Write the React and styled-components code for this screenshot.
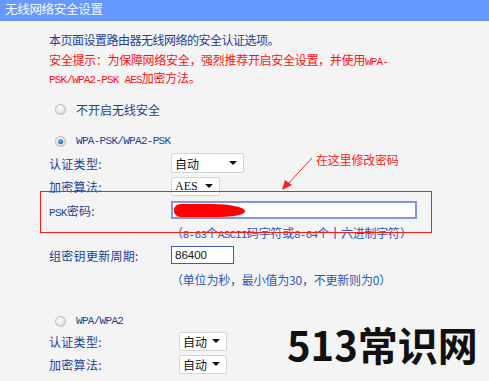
import React from 'react';
import styled, { createGlobalStyle } from 'styled-components';

const GlobalStyle = createGlobalStyle`
  html, body {
    margin: 0;
    padding: 0;
    background: #f4f4f4;
  }
  body {
    font-family: "Noto Sans CJK SC", "Noto Sans", sans-serif;
  }
`;

const Page = styled.div`
  position: relative;
  width: 489px;
  height: 381px;
  overflow: hidden;
  background: #f4f4f4;
`;

const TitleBar = styled.div`
  height: 21px;
  background: #6699ff;
  color: #f4f8ff;
  font-size: 12.5px;
  line-height: 18px;
  padding-left: 5px;
  letter-spacing: -0.3px;
`;

const Main = styled.div`
  padding-left: 49px;
`;

const Intro = styled.div`
  margin-top: 11px;
  font-size: 12px;
  line-height: 16px;
  color: #1d3f96;
  letter-spacing: -0.5px;
  white-space: nowrap;
`;

const Warning = styled.div`
  margin-top: 4px;
  font-size: 12px;
  line-height: 16px;
  color: #ff1010;
  letter-spacing: -0.3px;
  white-space: nowrap;
`;

const Latin = styled.span`
  font-family: "Liberation Mono", monospace;
  font-size: 11px;
  letter-spacing: -0.8px;
`;

const RadioRow = styled.div`
  display: flex;
  align-items: center;
  height: 20px;
  margin-top: ${p => p.$top}px;
  padding-left: 6px;
  gap: 10px;
  font-size: 12px;
  color: #1d3f96;
`;

const Radio = styled.span`
  width: 11px;
  height: 11px;
  border-radius: 50%;
  box-sizing: border-box;
  border: 1px solid #b8b8b8;
  background: radial-gradient(circle at 40% 35%, #ffffff 0%, #e6e6e6 55%, #c8c8c8 100%);
  display: flex;
  align-items: center;
  justify-content: center;

  &::after {
    content: '';
    display: ${p => (p.$checked ? 'block' : 'none')};
    width: 5px;
    height: 5px;
    border-radius: 50%;
    background: radial-gradient(circle at 40% 35%, #7fc0ff 0%, #1a5fb8 70%, #0f3f80 100%);
  }
`;

const MonoLabel = styled.span`
  font-family: "Liberation Mono", monospace;
  font-size: 11px;
  letter-spacing: -0.7px;
  color: #1d3f96;
`;

const FieldRow = styled.div`
  display: grid;
  grid-template-columns: ${p => p.$col || 122}px 1fr;
  align-items: center;
  height: 20px;
  margin-top: ${p => p.$top}px;
`;

const Label = styled.span`
  font-size: 12px;
  color: #1d3f96;
  letter-spacing: 0.3px;
`;

const MonoInLabel = styled.span`
  font-family: "Liberation Mono", monospace;
  font-size: 11px;
  letter-spacing: -0.7px;
`;

const Select = styled.div`
  position: relative;
  box-sizing: border-box;
  width: ${p => p.$w}px;
  height: ${p => p.$h || 20}px;
  background: #ffffff;
  border: 1px solid #d4d4d4;
  border-radius: 2px;
  display: flex;
  align-items: center;
  justify-content: space-between;
  padding: 0 6px 0 3px;
  font-size: 12px;
  color: #111;

  &::after {
    content: '';
    border-left: 4px solid transparent;
    border-right: 4px solid transparent;
    border-top: 4px solid #111;
  }
`;

const SelectMono = styled.span`
  font-family: "Liberation Serif", serif;
  font-size: 12px;
`;

const TextBox = styled.div`
  position: relative;
  box-sizing: border-box;
  width: ${p => p.$w}px;
  height: 18px;
  background: #ffffff;
  border: ${p => (p.$focus ? '2px solid #8496d4' : '1px solid #3f5da8')};
  font-family: "Liberation Sans", Arial, sans-serif;
  font-size: 11.5px;
  line-height: 16px;
  padding-left: 3px;
  color: #111;
`;

const Scribble = styled.span`
  position: absolute;
  left: 1px;
  top: 1px;
  width: 71px;
  height: 13px;
  background: #ff0000;
  border-radius: 8px 40px 30px 8px / 7px 9px 7px 7px;
`;

const Hint = styled.div`
  height: 18px;
  line-height: 18px;
  margin-top: ${p => p.$top}px;
  padding-left: 122px;
  font-size: 12px;
  color: #2b58bd;
  white-space: nowrap;
  letter-spacing: -0.2px;
`;

const HintMono = styled.span`
  font-family: "Liberation Mono", monospace;
  font-size: 11px;
  letter-spacing: -0.8px;
`;

const HighlightBox = styled.div`
  position: absolute;
  left: 40px;
  top: 191px;
  width: 392px;
  height: 42px;
  box-sizing: border-box;
  border: 1px solid #ff1a1a;
  pointer-events: none;
`;

const Note = styled.div`
  position: absolute;
  left: 316px;
  top: 151px;
  font-size: 12px;
  line-height: 17px;
  color: #ff2222;
  letter-spacing: -0.2px;
`;

const Arrow = styled.svg`
  position: absolute;
  left: 276px;
  top: 152px;
`;

const Watermark = styled.div`
  position: absolute;
  left: 287px;
  top: 324px;
  font-size: 40px;
  font-weight: 700;
  line-height: 1;
  color: #111;
`;

function App() {
  return (
    <Page>
      <GlobalStyle />
      <TitleBar>无线网络安全设置</TitleBar>
      <Main>
        <Intro>本页面设置路由器无线网络的安全认证选项。</Intro>
        <Warning>
          安全提示：为保障网络安全，强烈推荐开启安全设置，并使用<Latin>WPA-</Latin>
          <br />
          <Latin>PSK/WPA2-PSK AES</Latin>加密方法。
        </Warning>

        <RadioRow $top={11}>
          <Radio />
          <span>不开启无线安全</span>
        </RadioRow>

        <RadioRow $top={12}>
          <Radio $checked />
          <MonoLabel>WPA-PSK/WPA2-PSK</MonoLabel>
        </RadioRow>
        <FieldRow $top={2}>
          <Label>认证类型:</Label>
          <Select $w={73}>自动</Select>
        </FieldRow>
        <FieldRow $top={3}>
          <Label>加密算法:</Label>
          <Select $w={49} $h={19}><SelectMono>AES</SelectMono></Select>
        </FieldRow>
        <FieldRow $top={4}>
          <Label><MonoInLabel>PSK</MonoInLabel>密码:</Label>
          <TextBox $w={246} $focus>
            <Scribble />
          </TextBox>
        </FieldRow>
        <Hint $top={4}>
          （<HintMono>8-63</HintMono>个<HintMono>ASCII</HintMono>码字符或<HintMono>8-64</HintMono>个十六进制字符）
        </Hint>
        <FieldRow $top={3}>
          <Label>组密钥更新周期:</Label>
          <TextBox $w={63}>86400</TextBox>
        </FieldRow>
        <Hint $top={6}>（单位为秒，最小值为30，不更新则为0）</Hint>

        <RadioRow $top={22}>
          <Radio />
          <MonoLabel>WPA/WPA2</MonoLabel>
        </RadioRow>
        <FieldRow $top={0} $col={130}>
          <Label>认证类型:</Label>
          <Select $w={48} $h={19}>自动</Select>
        </FieldRow>
        <FieldRow $top={3} $col={130}>
          <Label>加密算法:</Label>
          <Select $w={48} $h={19}>自动</Select>
        </FieldRow>
      </Main>

      <HighlightBox />
      <Note>在这里修改密码</Note>
      <Arrow width="40" height="42" viewBox="0 0 40 42">
        <line x1="36" y1="6" x2="11" y2="33" stroke="#ff2020" strokeWidth="1" />
        <polygon points="6,38 9,28 16,33" fill="#ff2020" />
      </Arrow>
      <Watermark>513常识网</Watermark>
    </Page>
  );
}

export default App;
